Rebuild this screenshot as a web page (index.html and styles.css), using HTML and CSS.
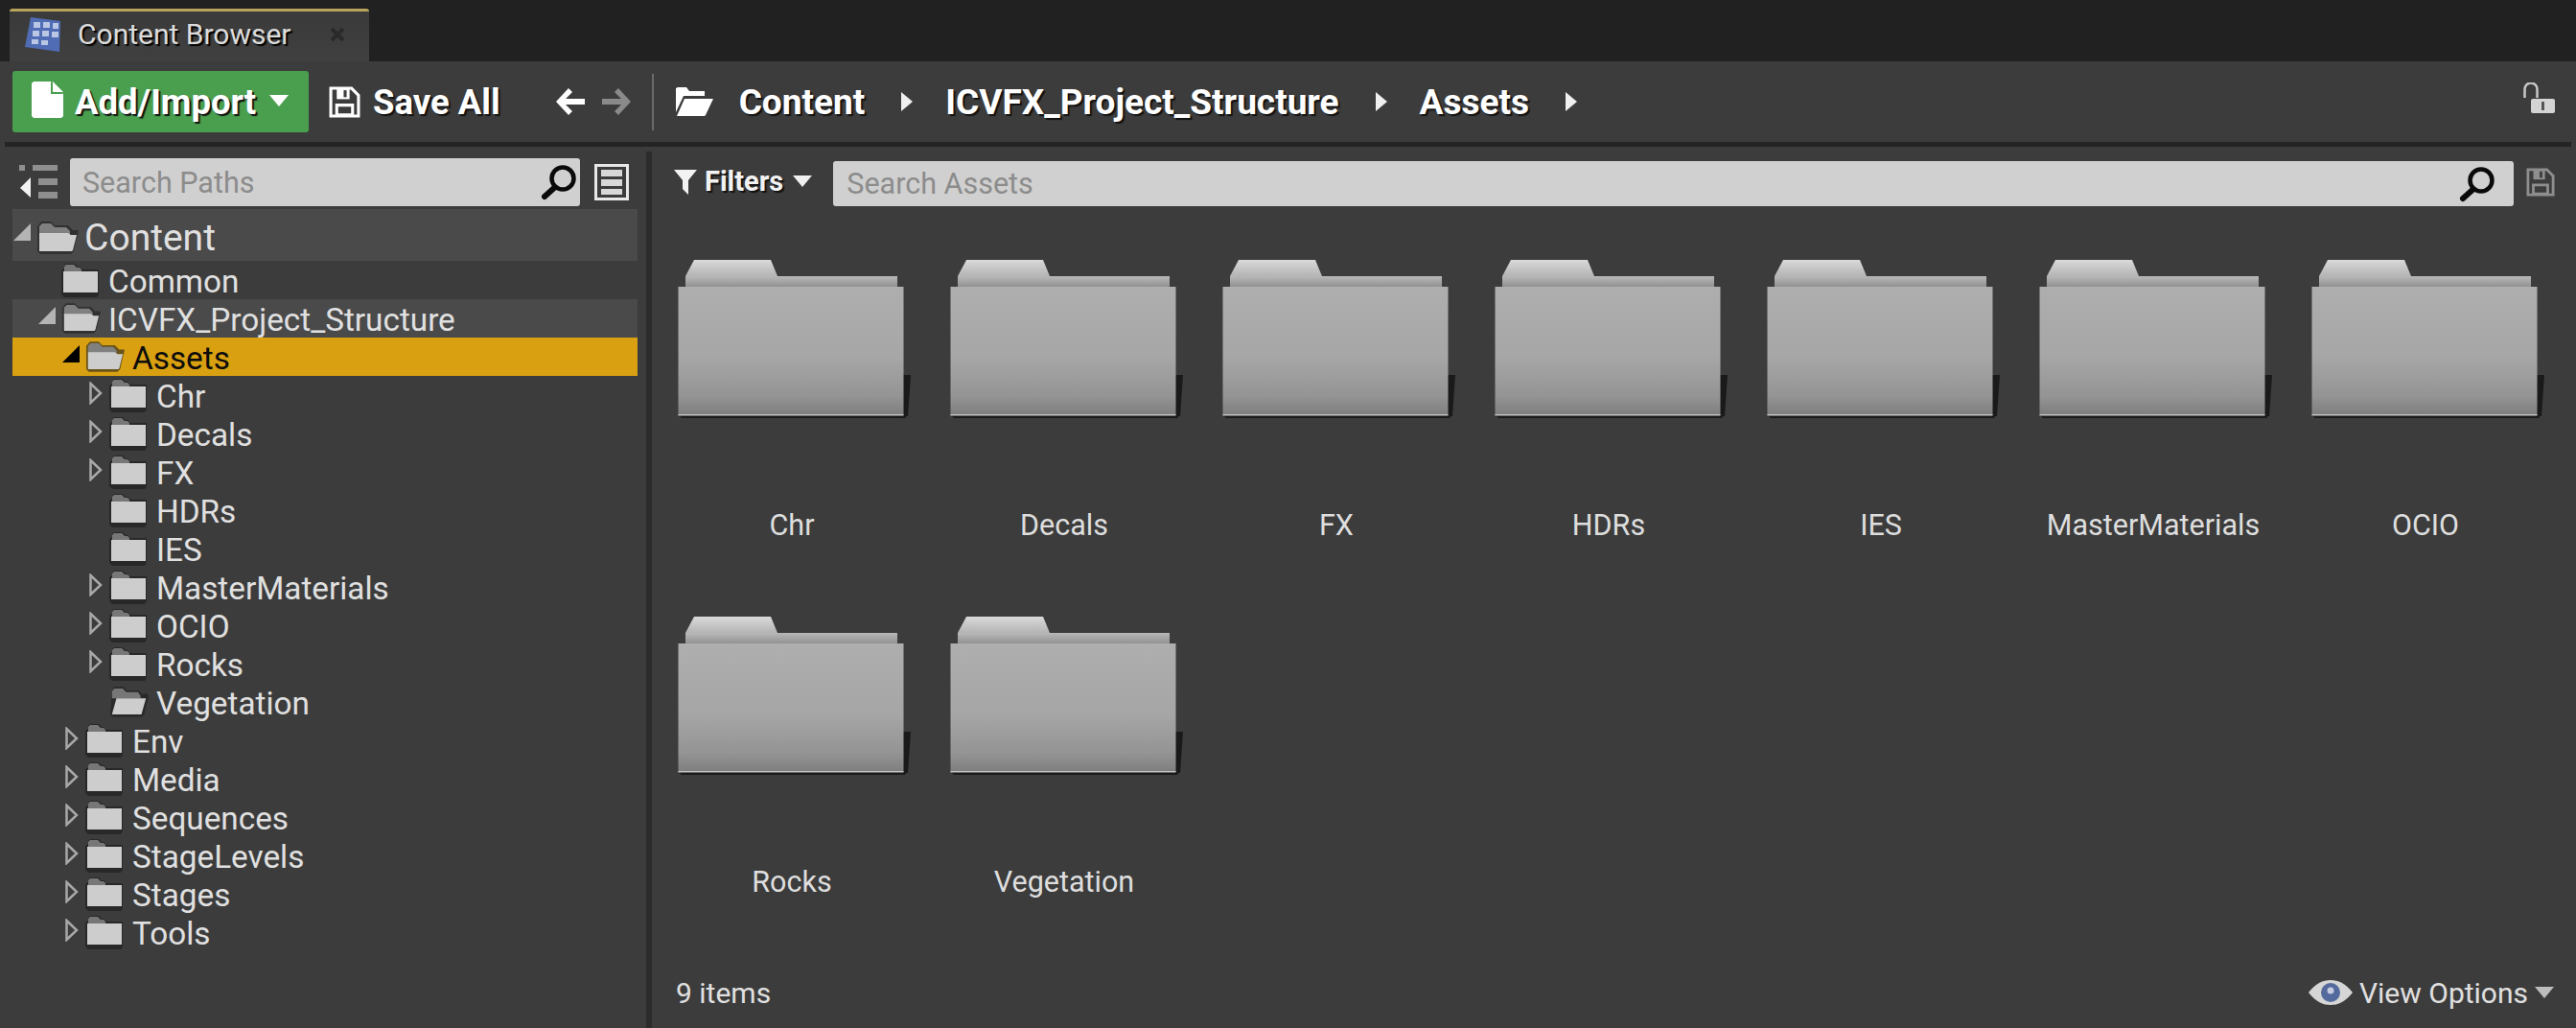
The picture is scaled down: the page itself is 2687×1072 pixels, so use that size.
FILE: index.html
```html
<!DOCTYPE html>
<html lang="en">
<head>
<meta charset="utf-8">
<title>Content Browser</title>
<link rel="stylesheet" href="styles.css">
</head>
<body>
<svg class="defs" aria-hidden="true">
  <defs>
    <linearGradient id="gFront" x1="0" y1="0" x2="0" y2="1">
      <stop offset="0" stop-color="#aeaeae"/><stop offset=".55" stop-color="#a6a6a6"/><stop offset=".85" stop-color="#949494"/><stop offset="1" stop-color="#7e7e7e"/>
    </linearGradient>
    <linearGradient id="gBack" x1="0" y1="0" x2="0" y2="1">
      <stop offset="0" stop-color="#b8b8b8"/><stop offset="1" stop-color="#929292"/>
    </linearGradient>
    <linearGradient id="gTab" x1="0" y1="0" x2="0" y2="1">
      <stop offset="0" stop-color="#dadada"/><stop offset="1" stop-color="#b4b4b4"/>
    </linearGradient>
    <symbol id="bigfolder" viewBox="0 0 284 170">
      <path d="M258 121h8l-3 43h-5zM24 163h238l-2 3H27z" fill="#141414" opacity=".85"/>
      <path d="M40 1h80l7 17H31z" fill="url(#gTab)"/>
      <path d="M31 18h221v11H31z" fill="url(#gBack)"/>
      <path d="M23.500 29h235v134h-235z" fill="url(#gFront)"/>
      <path d="M23.500 162h235v1.500h-235z" fill="#c4c4c4"/>
    </symbol>
    <symbol id="folder" viewBox="0 0 41 36">
      <path d="M3 6V3l2-2h9l3 3h2l3 3h17v26l-2 3H3l-3-3V8z" fill="#222" opacity=".75"/>
      <path d="M3 9V4l2-2h8l3 3h3l2 2v2z" fill="#777"/>
      <path d="M2 9h36v22H2z" fill="#cdcdcd"/>
    </symbol>
    <symbol id="openfolder" viewBox="0 0 44 36">
      <path d="M1 6l4-5h10l4 4h14l5 5h6l-5 22-3 3H4l-3-3z" fill="#222" opacity=".6"/>
      <path d="M3 20V6l3-3h9l4 4h12l4 4v4H3z" fill="#808080"/>
      <path d="M3 13h30l3 2h6l-4 16-1 1H3z" fill="#cdcdcd"/>
    </symbol>
    <symbol id="openfolderskew" viewBox="0 0 44 36">
      <path d="M3 6l3-5h10l4 4h13l3 4h7l1 3-5 20-2 3H4l-3-3z" fill="#222" opacity=".7"/>
      <path d="M3 31V6l3-3h9l4 4h13l3 4v3H3z" fill="#777"/>
      <path d="M8 14h33l-5 18H3z" fill="#cdcdcd"/>
    </symbol>
    <symbol id="twistyopen" viewBox="0 0 18 18"><path d="M18 0v18H0z" fill="currentColor"/></symbol>
    <symbol id="twistyclosed" viewBox="0 0 14 24"><path d="M1.500 2L12 12 1.500 22z" fill="none" stroke="currentColor" stroke-width="2.500"/></symbol>
    <symbol id="magnifier" viewBox="0 0 38 38">
      <circle cx="23" cy="15" r="11.500" fill="none" stroke="#0a0a0a" stroke-width="4.500"/>
      <path d="M14 25L4 34" stroke="#0a0a0a" stroke-width="6" stroke-linecap="round"/>
    </symbol>
    <symbol id="save" viewBox="0 0 32 32">
      <path d="M2 2h21l7 7v21H2z" fill="none" stroke="currentColor" stroke-width="3"/>
      <path d="M8 3h13v10H8z" fill="currentColor"/>
      <path d="M15 4h3v7h-3z" fill="#3c3c3c"/>
      <path d="M8 19h16v10H8z" fill="none" stroke="currentColor" stroke-width="3"/>
    </symbol>
    <symbol id="caret" viewBox="0 0 20 12"><path d="M0 0h20L10 12z" fill="currentColor"/></symbol>
  </defs>
</svg>

<div class="app">
  <div class="tabbar">
    <div class="tab">
      <svg class="tab-icon" viewBox="0 0 38 36">
        <path d="M6 0l31 4-1 32-36-5z" fill="#4f6cb4"/>
        <path d="M9 5h7v6H9zM19 5h7v6h-7zM29 6h6v6h-6zM8 14h7v6H8zM18 14h7v6h-7zM28 15h7v6h-7zM7 23h7v5H7zM17 24h7v5h-7z" fill="#b9c6e4"/>
      </svg>
      <span class="tab-title">Content Browser</span>
      <svg class="tab-close" viewBox="0 0 16 16"><path d="M2 2l12 12M14 2L2 14" stroke="#2a2a2a" stroke-width="4"/></svg>
    </div>
  </div>

  <div class="toolbar">
    <div class="add-btn">
      <svg class="add-file" viewBox="0 0 33 38"><path d="M0 2l2-2h18l13 13v23l-2 2H2l-2-2z" fill="#fff"/><path d="M20 0v13h13z" fill="#4a9f4f"/><path d="M22 0l11 11H22z" fill="#fff"/></svg>
      <span class="add-label">Add/Import</span>
      <svg class="add-caret"><use href="#caret"/></svg>
    </div>
    <svg class="save-icon"><use href="#save"/></svg>
    <span class="save-label">Save All</span>
    <svg class="nav-back" viewBox="0 0 32 32"><path d="M14 2L1 16l13 14 4-4-7-7h20v-6H11l7-7z" fill="#fff"/></svg>
    <svg class="nav-fwd" viewBox="0 0 32 32"><path d="M18 2l13 14-13 14-4-4 7-7H1v-6h20l-7-7z" fill="#8a8a8a"/></svg>
    <div class="tool-sep"></div>
    <svg class="crumb-folder" viewBox="0 0 39 30"><path d="M0 26V1l2-1h9l3 4h16v5H8zM9 12h30l-8 17-1 1H1z" fill="#fff"/></svg>
    <span class="crumb first">Content</span>
    <svg class="crumb-arrow" viewBox="0 0 12 20"><path d="M0 0l12 10L0 20z" fill="#f0f0f0"/></svg>
    <span class="crumb">ICVFX_Project_Structure</span>
    <svg class="crumb-arrow" viewBox="0 0 12 20"><path d="M0 0l12 10L0 20z" fill="#f0f0f0"/></svg>
    <span class="crumb">Assets</span>
    <svg class="crumb-arrow" viewBox="0 0 12 20"><path d="M0 0l12 10L0 20z" fill="#f0f0f0"/></svg>
    <svg class="lock" viewBox="0 0 33 32">
      <path d="M1.500 16V7a6.500 6.500 0 0 1 13 0v9" fill="none" stroke="#c8c8c8" stroke-width="2.500"/>
      <rect x="8" y="17" width="25" height="15" rx="2" fill="#d4d4d4"/>
      <rect x="19" y="20" width="3" height="9" fill="#555"/>
    </svg>
  </div>
  <div class="rule"></div>

  <div class="main">
    <aside class="sidebar">
      <div class="path-search">
        <svg class="tree-toggle" viewBox="0 0 40 36">
          <path d="M0 0h6v6H0zM14 0h26v6H14zM20 14h20v7H20zM20 28h20v7H20z" fill="#8f8f8f"/>
          <path d="M12 13v21L1 24z" fill="#f2f2f2"/>
        </svg>
        <div class="search-box paths">
          <span class="placeholder">Search Paths</span>
          <svg class="magnifier"><use href="#magnifier"/></svg>
        </div>
        <svg class="list-toggle" viewBox="0 0 36 38">
          <path d="M1.500 1.500h33v35h-33z" fill="none" stroke="#e8e8e8" stroke-width="3"/>
          <path d="M7 6h22v7H7zM7 16h22v7H7zM7 26h22v6H7z" fill="#d8d8d8"/>
        </svg>
      </div>
      <div class="tree">
        <div class="row root hilite"><svg class="tw-open"><use href="#twistyopen"/></svg><svg class="ofolder large"><use href="#openfolder"/></svg><span>Content</span></div>
        <div class="row l1"><i class="tw-none"></i><svg class="folder"><use href="#folder"/></svg><span>Common</span></div>
        <div class="row l1 hilite"><svg class="tw-open"><use href="#twistyopen"/></svg><svg class="ofolder"><use href="#openfolder"/></svg><span>ICVFX_Project_Structure</span></div>
        <div class="row l2 selected"><svg class="tw-open"><use href="#twistyopen"/></svg><svg class="ofolder"><use href="#openfolder"/></svg><span>Assets</span></div>
        <div class="row l3"><svg class="tw-closed"><use href="#twistyclosed"/></svg><svg class="folder"><use href="#folder"/></svg><span>Chr</span></div>
        <div class="row l3"><svg class="tw-closed"><use href="#twistyclosed"/></svg><svg class="folder"><use href="#folder"/></svg><span>Decals</span></div>
        <div class="row l3"><svg class="tw-closed"><use href="#twistyclosed"/></svg><svg class="folder"><use href="#folder"/></svg><span>FX</span></div>
        <div class="row l3"><i class="tw-none"></i><svg class="folder"><use href="#folder"/></svg><span>HDRs</span></div>
        <div class="row l3"><i class="tw-none"></i><svg class="folder"><use href="#folder"/></svg><span>IES</span></div>
        <div class="row l3"><svg class="tw-closed"><use href="#twistyclosed"/></svg><svg class="folder"><use href="#folder"/></svg><span>MasterMaterials</span></div>
        <div class="row l3"><svg class="tw-closed"><use href="#twistyclosed"/></svg><svg class="folder"><use href="#folder"/></svg><span>OCIO</span></div>
        <div class="row l3"><svg class="tw-closed"><use href="#twistyclosed"/></svg><svg class="folder"><use href="#folder"/></svg><span>Rocks</span></div>
        <div class="row l3"><i class="tw-none"></i><svg class="ofolder"><use href="#openfolderskew"/></svg><span>Vegetation</span></div>
        <div class="row l2"><svg class="tw-closed"><use href="#twistyclosed"/></svg><svg class="folder"><use href="#folder"/></svg><span>Env</span></div>
        <div class="row l2"><svg class="tw-closed"><use href="#twistyclosed"/></svg><svg class="folder"><use href="#folder"/></svg><span>Media</span></div>
        <div class="row l2"><svg class="tw-closed"><use href="#twistyclosed"/></svg><svg class="folder"><use href="#folder"/></svg><span>Sequences</span></div>
        <div class="row l2"><svg class="tw-closed"><use href="#twistyclosed"/></svg><svg class="folder"><use href="#folder"/></svg><span>StageLevels</span></div>
        <div class="row l2"><svg class="tw-closed"><use href="#twistyclosed"/></svg><svg class="folder"><use href="#folder"/></svg><span>Stages</span></div>
        <div class="row l2"><svg class="tw-closed"><use href="#twistyclosed"/></svg><svg class="folder"><use href="#folder"/></svg><span>Tools</span></div>
      </div>
    </aside>
    <div class="splitter"></div>
    <section class="content">
      <div class="filterbar">
        <svg class="funnel" viewBox="0 0 24 26"><path d="M0 0h24l-9 11v15l-6-6v-9z" fill="#f2f2f2"/></svg>
        <span class="filters-label">Filters</span>
        <svg class="filters-caret"><use href="#caret"/></svg>
        <div class="search-box assets">
          <span class="placeholder">Search Assets</span>
          <svg class="magnifier"><use href="#magnifier"/></svg>
        </div>
        <svg class="save-small"><use href="#save"/></svg>
      </div>
      <div class="tiles">
        <div class="tile"><svg class="tile-folder"><use href="#bigfolder"/></svg><div class="tile-label">Chr</div></div>
        <div class="tile"><svg class="tile-folder"><use href="#bigfolder"/></svg><div class="tile-label">Decals</div></div>
        <div class="tile"><svg class="tile-folder"><use href="#bigfolder"/></svg><div class="tile-label">FX</div></div>
        <div class="tile"><svg class="tile-folder"><use href="#bigfolder"/></svg><div class="tile-label">HDRs</div></div>
        <div class="tile"><svg class="tile-folder"><use href="#bigfolder"/></svg><div class="tile-label">IES</div></div>
        <div class="tile"><svg class="tile-folder"><use href="#bigfolder"/></svg><div class="tile-label">MasterMaterials</div></div>
        <div class="tile"><svg class="tile-folder"><use href="#bigfolder"/></svg><div class="tile-label">OCIO</div></div>
        <div class="tile"><svg class="tile-folder"><use href="#bigfolder"/></svg><div class="tile-label">Rocks</div></div>
        <div class="tile"><svg class="tile-folder"><use href="#bigfolder"/></svg><div class="tile-label">Vegetation</div></div>
      </div>
      <div class="statusbar">
        <span class="count">9 items</span>
        <div class="view-options">
          <svg class="eye" viewBox="0 0 46 26">
            <path d="M0 13C8 3 15 0 23 0s15 3 23 13c-8 10-15 13-23 13S8 23 0 13z" fill="#d6d6d6"/>
            <circle cx="23" cy="13" r="10" fill="#54699c"/>
            <circle cx="23" cy="11" r="3.500" fill="#c4cde0"/>
          </svg>
          <span>View Options</span>
          <svg class="view-caret"><use href="#caret"/></svg>
        </div>
      </div>
    </section>
  </div>
</div>
</body>
</html>
```
FILE: styles.css
```css
* { box-sizing: border-box; }
html, body { margin: 0; padding: 0; }
body {
  background: #3c3c3c;
  font-family: Roboto, "Liberation Sans", sans-serif;
  color: #e2e2e2;
  overflow: hidden;
}
svg { display: block; flex-shrink: 0; }
.defs { width: 0; height: 0; position: absolute; }
.app {
  width: 2687px;
  height: 1072px;
  display: flex;
  flex-direction: column;
  background: #3c3c3c;
}

/* tab strip */
.tabbar {
  height: 64px;
  background: #212121;
  padding: 9px 0 0 10px;
  display: flex;
}
.tab {
  width: 375px;
  background: linear-gradient(#3a3a3a, #404040);
  border-top: 3px solid #b8a45a;
  border-radius: 3px 3px 0 0;
  padding-left: 16px;
  display: flex;
  align-items: center;
}
.tab-icon { width: 38px; height: 36px; margin-top: -5px; }
.tab-title {
  margin-left: 17px;
  font-size: 30px;
  color: #dcdcdc;
  text-shadow: 2px 2px 1px #000;
  margin-top: -6px;
}
.tab-close { width: 16px; height: 16px; margin-left: 40px; margin-top: -4px; }

/* main toolbar */
.toolbar {
  height: 84px;
  padding: 0 22px 0 13px;
  display: flex;
  align-items: center;
}
.add-btn {
  width: 309px;
  height: 64px;
  background: #4a9f4f;
  border-radius: 3px;
  padding-left: 20px;
  display: flex;
  align-items: center;
}
.add-file { width: 33px; height: 38px; margin-top: -4px; }
.add-label, .save-label, .crumb {
  font-size: 37px;
  font-weight: 700;
  color: #fff;
  text-shadow: 2px 2px 1px #111;
  white-space: nowrap;
}
.add-label { margin-left: 12px; font-size: 36.500px; }
.add-caret { width: 20px; height: 12px; margin-left: 14px; color: #fff; margin-top: -2px; }
.save-icon { width: 33px; height: 33px; margin-left: 21px; color: #fff; }
.save-label { margin-left: 13px; font-size: 36.500px; }
.nav-back { width: 32px; height: 32px; margin-left: 57px; }
.nav-fwd { width: 32px; height: 32px; margin-left: 16px; }
.tool-sep { width: 2px; height: 59px; margin-left: 21px; background: #6a6a6a; }
.crumb-folder { width: 39px; height: 30px; margin-left: 23px; }
.crumb { margin-left: 34px; font-size: 37px; }
.crumb.first { margin-left: 27px; }
.crumb-arrow { width: 12px; height: 20px; margin-left: 38px; }
.lock { width: 33px; height: 32px; margin-left: auto; margin-top: -8px; }
.rule { height: 5px; margin: 0 5px; background: #242424; }

/* layout */
.main { flex: 1; display: flex; min-height: 0; }
.sidebar { width: 674px; padding-top: 12px; }
.splitter { width: 6px; margin-top: 5px; background: #2c2c2c; }
.content { flex: 1; display: flex; flex-direction: column; min-width: 0; }

/* search */
.path-search { height: 50px; display: flex; align-items: center; padding-left: 20px; }
.tree-toggle { width: 40px; height: 36px; }
.search-box {
  height: 50px;
  background: #d0d0d0;
  border-radius: 3px;
  display: flex;
  align-items: center;
  padding: 0 3px 0 13px;
  justify-content: space-between;
}
.search-box.paths { width: 532px; margin-left: 13px; }
.search-box.assets { width: 1754px; height: 47px; margin-left: 22px; padding-right: 19px; padding-left: 14px; }
.placeholder { font-size: 30.500px; color: #8c8c8c; white-space: nowrap; }
.magnifier { width: 38px; height: 38px; }
.list-toggle { width: 36px; height: 38px; margin-left: 15px; }

/* tree */
.tree { margin: 3px 9px 0 13px; }
.row {
  height: 40px;
  display: flex;
  align-items: center;
  font-size: 33.300px;
  color: #e0e0e0;
  white-space: nowrap;
}
.row span { margin-left: 8px; margin-top: 2px; }
.row.root { height: 54px; padding-left: 1px; font-size: 39px; }
.row.root span { margin-left: 6px; margin-top: 5px; }
.row.l1 { padding-left: 27px; }
.row.l2 { padding-left: 52px; }
.row.l3 { padding-left: 77px; }
.row.hilite { background: #4a4a4a; }
.row.selected { background: #d9a011; color: #0c0c0c; }
.tw-open { width: 18px; height: 18px; margin-right: 6px; color: #b4b4b4; margin-top: -6px; }
.selected .tw-open { color: #000; }
.tw-closed { width: 14px; height: 24px; margin: -4px 7px 0 3px; color: #a8a8a8; }
.tw-none { width: 24px; flex-shrink: 0; }
.folder { width: 41px; height: 36px; }
.ofolder { width: 41px; height: 36px; }
.ofolder.large { width: 44px; height: 38px; margin-top: 5px; }

/* right pane */
.filterbar { height: 62px; padding: 15px 22px 0 23px; display: flex; align-items: center; }
.funnel { width: 24px; height: 26px; margin-top: -3px; }
.filters-label {
  font-size: 29px;
  font-weight: 700;
  margin-left: 8px;
  margin-top: -6px;
  color: #f2f2f2;
  text-shadow: 2px 2px 1px #111;
}
.filters-caret { width: 20px; height: 12px; margin-left: 10px; margin-top: -5px; color: #f0f0f0; }
.save-small { width: 30px; height: 30px; margin-left: 13px; color: #8e8e8e; margin-top: -4px; }
.tiles {
  flex: 1;
  min-height: 0;
  margin: 55px 0 0 4px;
  display: grid;
  grid-template-columns: repeat(7, 284px);
  grid-auto-rows: 372px;
  align-content: start;
}
.tile { display: flex; flex-direction: column; align-items: center; }
.tile-folder { width: 284px; height: 170px; }
.tile-label { margin-top: 88px; font-size: 30.500px; line-height: 40px; color: #dedede; }
.statusbar {
  height: 74px;
  padding: 0 23px 0 25px;
  display: flex;
  align-items: center;
  justify-content: space-between;
  font-size: 30px;
  color: #e0e0e0;
}
.view-options { display: flex; align-items: center; }
.eye { width: 46px; height: 26px; margin-right: 7px; }
.view-caret { width: 20px; height: 12px; margin-left: 7px; color: #bdbdbd; }
```
